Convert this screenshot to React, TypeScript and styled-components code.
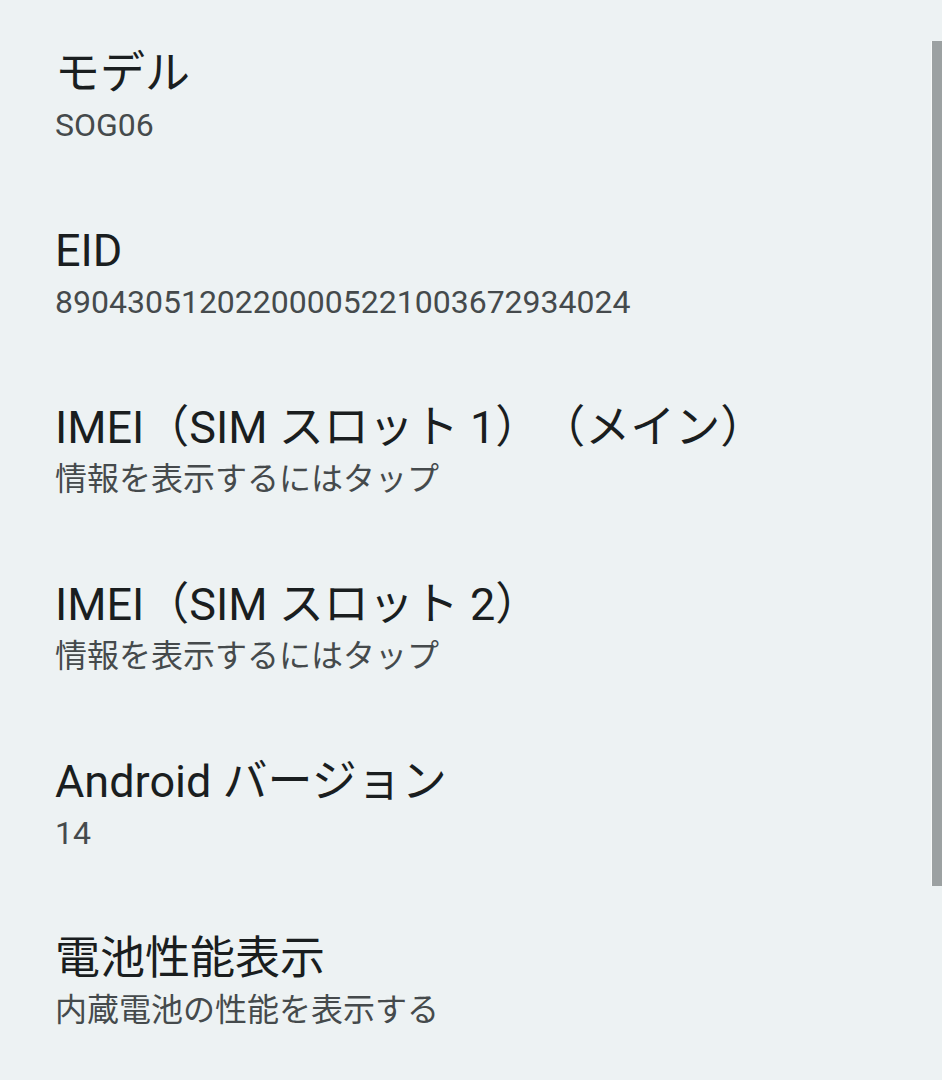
import React from "react";
import styled, { createGlobalStyle } from "styled-components";

const GlobalStyle = createGlobalStyle`
  html, body {
    margin: 0;
    padding: 0;
    background: #edf2f3;
  }
  body {
    font-family: Roboto, "Noto Sans CJK JP", sans-serif;
    text-spacing-trim: space-all;
  }
`;

const Page = styled.div`
  position: relative;
  width: 942px;
  height: 1080px;
  overflow: hidden;
  background: #edf2f3;
  padding-top: 9px;
  box-sizing: border-box;
`;

const List = styled.div`
  display: flex;
  flex-direction: column;
`;

const Row = styled.div`
  display: flex;
  flex-direction: column;
  padding: 37px 55px 38px;
`;

const Title = styled.div`
  height: 56px;
  font-size: 45px;
  line-height: 56px;
  color: #1a1e1f;
  white-space: nowrap;
  text-spacing-trim: space-all;
`;

const Summary = styled.div`
  height: 46px;
  font-size: 32px;
  line-height: 46px;
  color: #454a4c;
  white-space: nowrap;
  text-spacing-trim: space-all;
`;

const Scrollbar = styled.div`
  position: absolute;
  top: 41px;
  right: 0;
  width: 10px;
  height: 845px;
  background: #9ca1a2;
  box-shadow: -1px 0 0 #f7f9f9;
`;

const items: { title: string; summary: string }[] = [
  { title: "モデル", summary: "SOG06" },
  { title: "EID", summary: "89043051202200005221003672934024" },
  { title: "IMEI（SIM スロット 1）（メイン）", summary: "情報を表示するにはタップ" },
  { title: "IMEI（SIM スロット 2）", summary: "情報を表示するにはタップ" },
  { title: "Android バージョン", summary: "14" },
  { title: "電池性能表示", summary: "内蔵電池の性能を表示する" },
];

export default function App() {
  return (
    <>
      <GlobalStyle />
      <Page>
        <List>
          {items.map((it) => (
            <Row key={it.title}>
              <Title>{it.title}</Title>
              <Summary>{it.summary}</Summary>
            </Row>
          ))}
        </List>
        <Scrollbar />
      </Page>
    </>
  );
}
